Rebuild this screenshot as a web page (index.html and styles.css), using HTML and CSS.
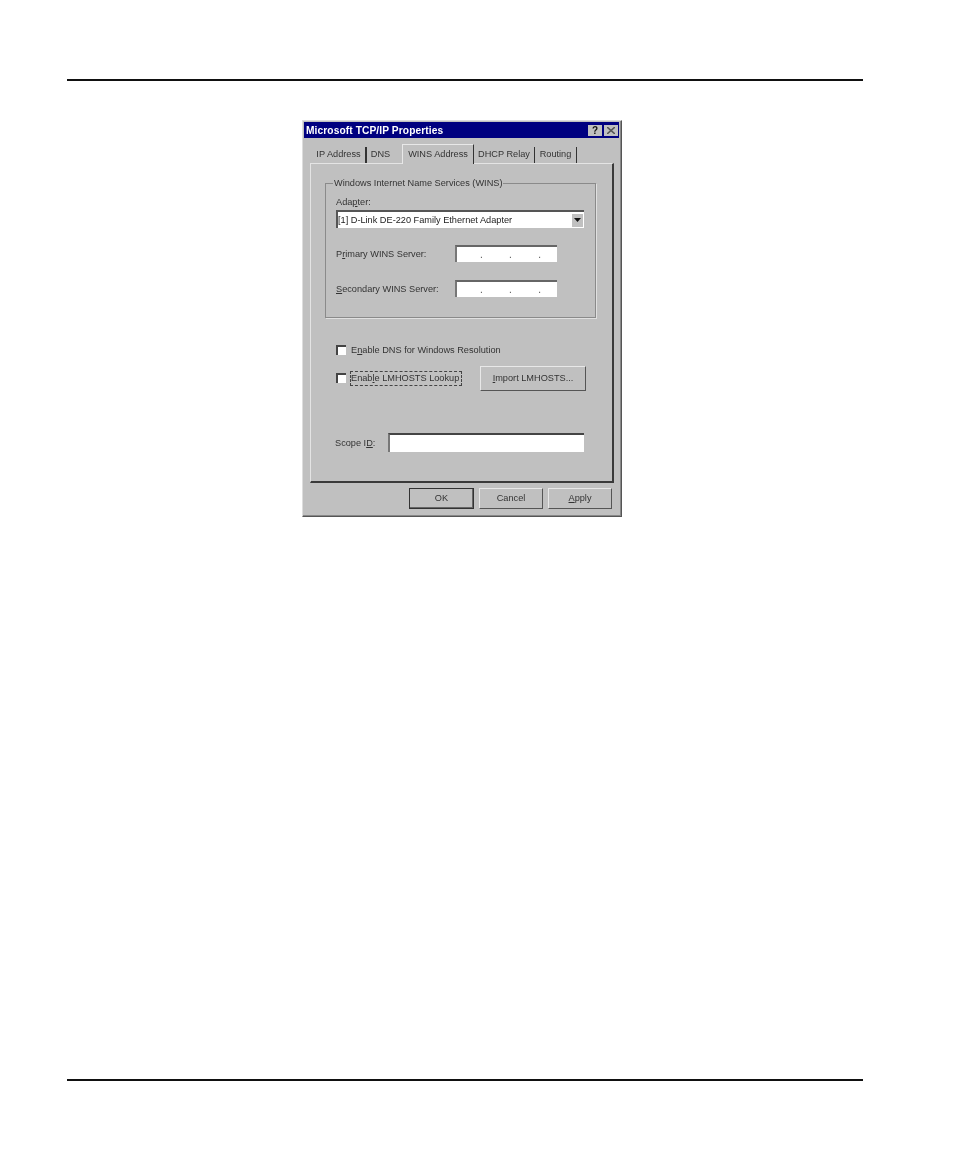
FILE: index.html
```html
<!DOCTYPE html>
<html lang="en">
<head>
    <meta charset="UTF-8">
    <title>Microsoft TCP/IP Properties</title>
    <link rel="stylesheet" href="styles.css">
</head>
<body>
    <div class="page">
        <hr class="rule">

        <div class="dialog">
            <div class="titlebar">
                <span class="title">Microsoft TCP/IP Properties</span>
                <span class="title-buttons">
                    <span class="title-btn">?</span>
                    <span class="title-btn close">
                        <svg width="8" height="7" viewBox="0 0 8 7"><path d="M0 0L8 7M8 0L0 7" stroke="#555" stroke-width="1.6"/></svg>
                    </span>
                </span>
            </div>

            <div class="tabs">
                <span class="tab tab-ip">IP Address</span>
                <span class="tab tab-dns">DNS</span>
                <span class="tab tab-wins active">WINS Address</span>
                <span class="tab tab-dhcp">DHCP Relay</span>
                <span class="tab tab-routing">Routing</span>
            </div>

            <div class="panel">
                <div class="group">
                    <span class="legend">Windows Internet Name Services (WINS)</span>
                    <div class="adapter-label">Ada<u>p</u>ter:</div>
                    <div class="select">
                        <span class="select-text">[1] D-Link DE-220 Family Ethernet Adapter</span>
                        <span class="select-arrow">
                            <svg width="7" height="4" viewBox="0 0 7 4"><path d="M0 0H7L3.5 4Z" fill="#111"/></svg>
                        </span>
                    </div>
                    <div class="field-row first">
                        <span class="field-label">P<u>r</u>imary WINS Server:</span>
                        <span class="sunken ip-field"><i>.</i><i>.</i><i>.</i></span>
                    </div>
                    <div class="field-row second">
                        <span class="field-label"><u>S</u>econdary WINS Server:</span>
                        <span class="sunken ip-field"><i>.</i><i>.</i><i>.</i></span>
                    </div>
                </div>

                <div class="check-row dns-check">
                    <span class="checkbox"></span>
                    <span>E<u>n</u>able DNS for Windows Resolution</span>
                </div>
                <div class="check-row lm-check">
                    <span class="checkbox"></span>
                    <span class="focused">Enab<u>l</u>e LMHOSTS Lookup</span>
                    <span class="button import-btn"><u>I</u>mport LMHOSTS...</span>
                </div>

                <div class="scope-row">
                    <span>Scope I<u>D</u>:</span>
                    <span class="sunken scope-field"></span>
                </div>
            </div>

            <div class="footer">
                <span class="button ok-btn">OK</span>
                <span class="button">Cancel</span>
                <span class="button"><u>A</u>pply</span>
            </div>
        </div>

        <hr class="rule rule-bottom">
    </div>
</body>
</html>
```

FILE: styles.css
```css
* {
    box-sizing: border-box;
}

body {
    margin: 0;
    background: white;
    font-family: 'Liberation Sans', Arial, sans-serif;
}

.page {
    width: 954px;
    height: 1159px;
    padding: 79px 91px 0 67px;
    display: flex;
    flex-direction: column;
}

.rule {
    width: 100%;
    height: 2px;
    margin: 0;
    border: none;
    background: #111;
    flex-shrink: 0;
}

.rule-bottom {
    margin-top: 562px;
}

/* Dialog window */
.dialog {
    width: 320px;
    height: 397px;
    margin: 39px 0 0 235px;
    padding: 1px 2px 2px 1px;
    background: #c0c0c0;
    border: 1px solid #555;
    border-top-color: #ddd;
    border-left-color: #ddd;
    box-shadow: inset -1px -1px 0 #888;
    color: #2a2a2a;
    font-size: 9.2px;
    flex-shrink: 0;
    filter: blur(0.6px);
}

.titlebar {
    height: 16px;
    padding: 0 1px 0 2px;
    background: #000080;
    display: flex;
    justify-content: space-between;
    align-items: center;
}

.title {
    color: white;
    font-size: 10.2px;
    font-weight: bold;
    letter-spacing: 0.1px;
}

.title-buttons {
    display: flex;
    gap: 2px;
}

.title-btn {
    width: 14px;
    height: 11px;
    background: #c0c0c0;
    color: #111;
    font-size: 10px;
    font-weight: bold;
    line-height: 11px;
    text-align: center;
    display: flex;
    align-items: center;
    justify-content: center;
}

/* Tabs */
.tabs {
    height: 25px;
    padding: 5px 0 0 8px;
    display: flex;
    align-items: flex-end;
}

.tab {
    height: 16px;
    line-height: 15px;
    text-align: center;
    color: #333;
    border-right: 1px solid #333;
    white-space: nowrap;
}

.tab-ip { width: 55px; border-right-width: 2px; }
.tab-dns { width: 27px; margin-right: 8px; border-right: none; }
.tab-wins { width: 72px; }
.tab-dhcp { width: 61px; }
.tab-routing { width: 42px; }

.tab.active {
    height: 20px;
    line-height: 18px;
    border-top: 1px solid #e8e8e8;
    border-left: 1px solid #e8e8e8;
    margin-bottom: -1px;
    position: relative;
    background: #c0c0c0;
}

/* Tab page */
.panel {
    width: 304px;
    height: 320px;
    margin-left: 6px;
    padding: 19px 17px 0 14px;
    border: 1px solid #e4e4e4;
    border-right: 2px solid #3a3a3a;
    border-bottom: 2px solid #3a3a3a;
}

.group {
    position: relative;
    width: 271px;
    height: 135px;
    padding: 11px 10px 0;
    border: 1px solid #8a8a8a;
    box-shadow: 1px 1px 0 #e0e0e0;
}

.legend {
    position: absolute;
    top: -6px;
    left: 7px;
    padding: 0 1px;
    background: #c0c0c0;
    color: #333;
    white-space: nowrap;
}

.adapter-label {
    height: 14px;
    line-height: 14px;
    color: #333;
}

.select {
    width: 248px;
    height: 18px;
    margin-top: 1px;
    padding: 0 2px 0 0;
    background: white;
    border-top: 2px solid #555;
    border-left: 2px solid #555;
    display: flex;
    justify-content: space-between;
    align-items: center;
}

.select-text {
    color: #222;
    white-space: nowrap;
}

.select-arrow {
    width: 11px;
    height: 13px;
    margin-right: -1px;
    background: #c0c0c0;
    display: flex;
    align-items: center;
    justify-content: center;
}

.field-row {
    display: flex;
    align-items: center;
    justify-content: space-between;
    width: 221px;
    height: 17px;
}

.field-row.first {
    margin-top: 17px;
}

.field-row.second {
    margin-top: 18px;
}

.field-label {
    color: #333;
    white-space: nowrap;
}

.sunken {
    background: white;
    border-top: 2px solid #666;
    border-left: 2px solid #777;
}

.ip-field {
    width: 102px;
    height: 17px;
    padding: 0 16px 0 23px;
    display: flex;
    justify-content: space-between;
    align-items: center;
    font-size: 10px;
}

.ip-field i {
    font-style: normal;
    color: #555;
}

/* Options below the group */
.check-row {
    display: flex;
    align-items: center;
    margin-left: 11px;
    color: #333;
    white-space: nowrap;
}

.dns-check {
    height: 12px;
    margin-top: 26px;
}

.lm-check {
    height: 26px;
    margin-top: 9px;
}

.checkbox {
    width: 10px;
    height: 10px;
    margin-right: 5px;
    background: white;
    border-top: 2px solid #444;
    border-left: 2px solid #444;
    flex-shrink: 0;
}

.focused {
    width: 110px;
    outline: 1px dashed #444;
    outline-offset: 0;
    line-height: 13px;
}

.button {
    width: 64px;
    height: 21px;
    text-align: center;
    line-height: 19px;
    background: #c0c0c0;
    color: #333;
    border-top: 1px solid #e8e8e8;
    border-left: 1px solid #e8e8e8;
    border-right: 1px solid #555;
    border-bottom: 1px solid #555;
    white-space: nowrap;
}

.import-btn {
    width: 106px;
    height: 25px;
    line-height: 23px;
    margin-left: 19px;
}

.scope-row {
    margin: 42px 0 0 10px;
    display: flex;
    align-items: center;
    color: #333;
}

.scope-field {
    width: 196px;
    height: 19px;
    margin-left: 13px;
    border-top-color: #444;
    border-left-color: #777;
}

/* OK / Cancel / Apply */
.footer {
    margin-top: 5px;
    padding-right: 7px;
    display: flex;
    justify-content: flex-end;
    gap: 5px;
}

.ok-btn {
    width: 65px;
    border: 1px solid #333;
    box-shadow: inset -1px -1px 0 #666;
}
```
